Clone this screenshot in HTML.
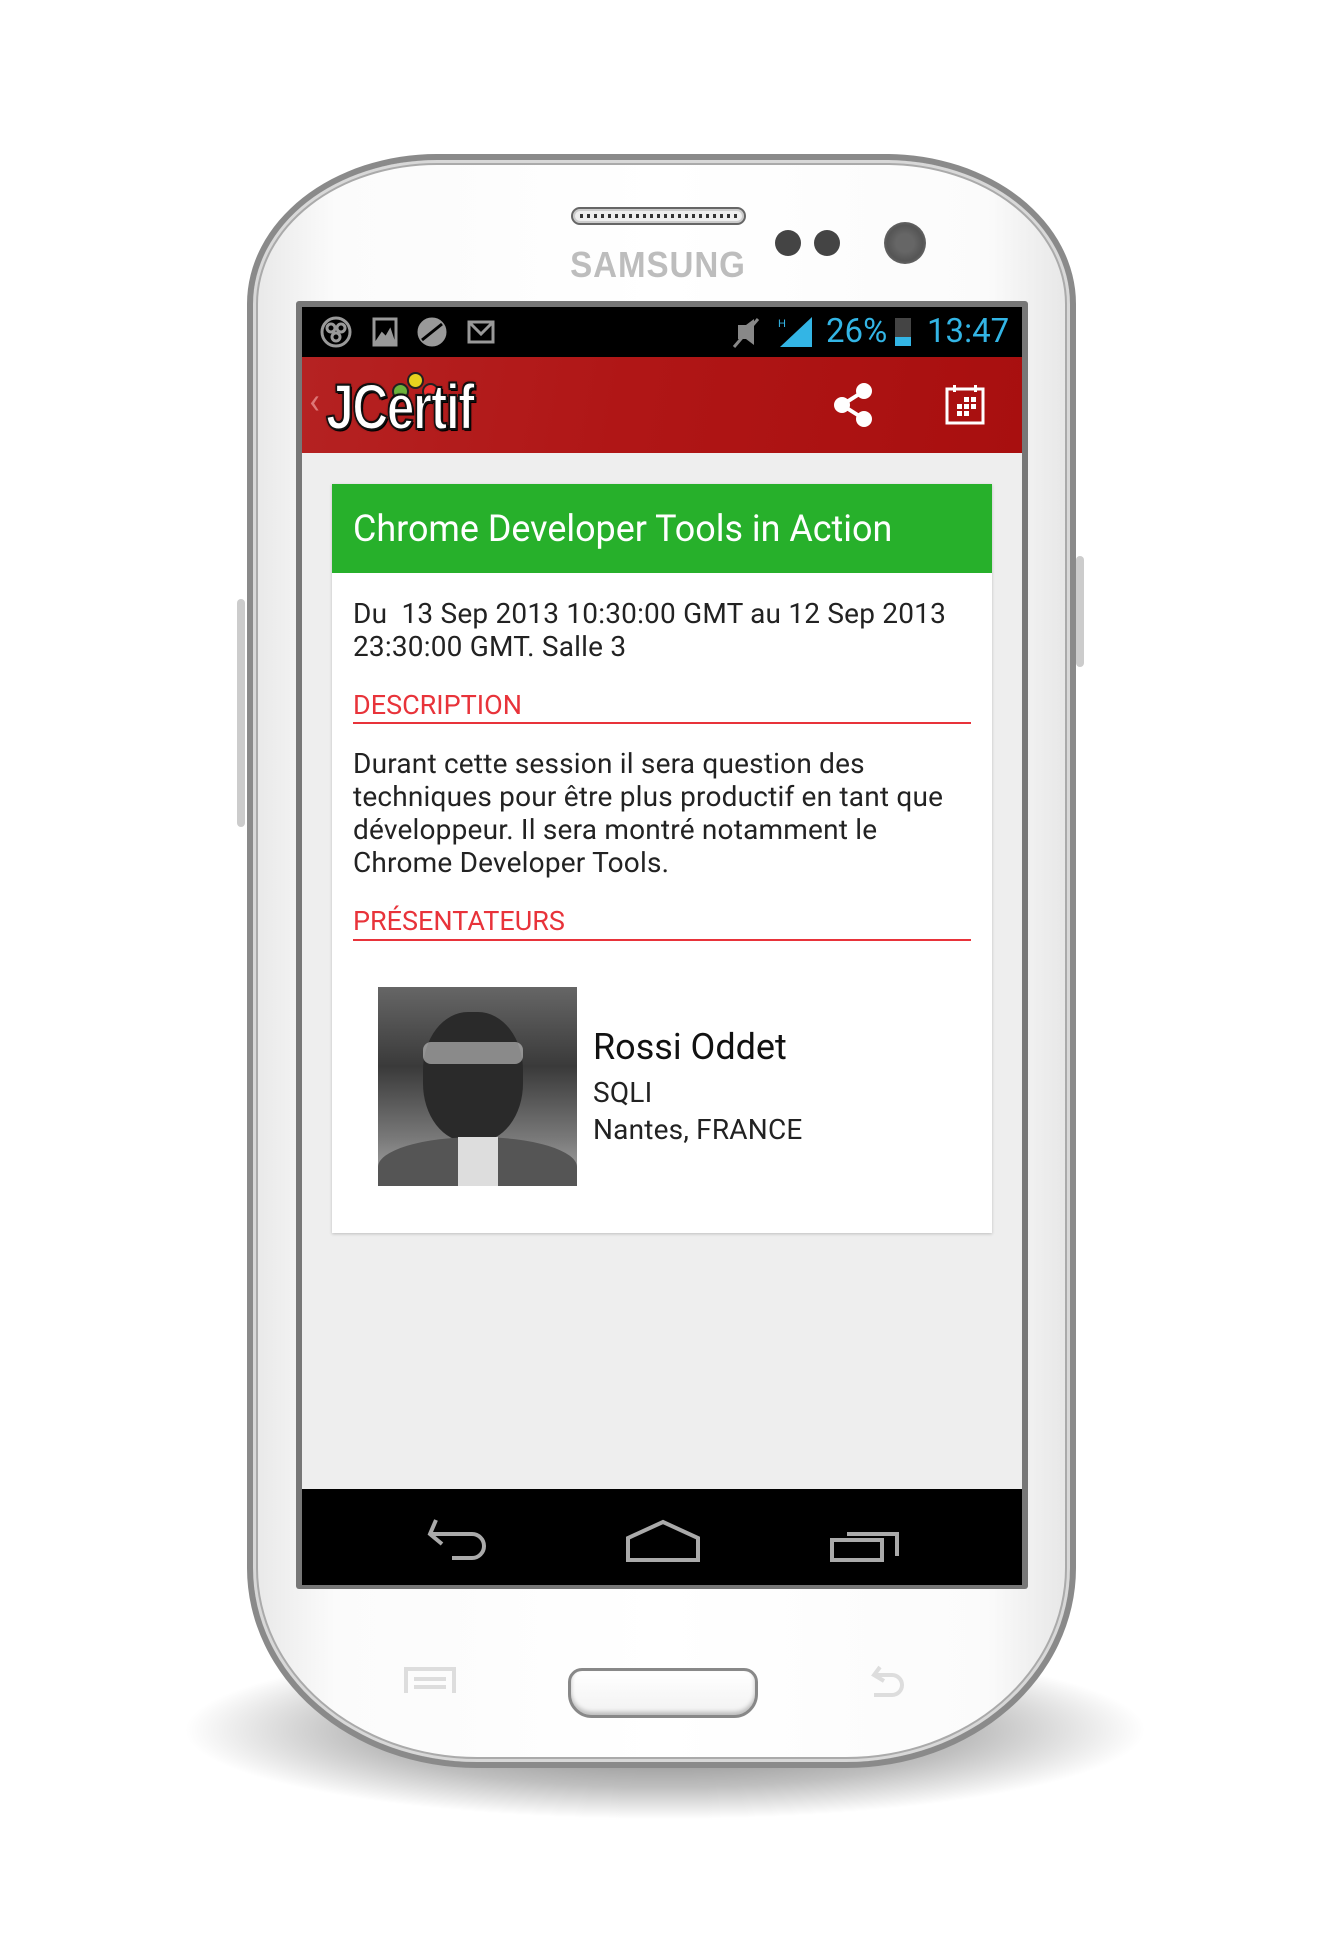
<!DOCTYPE html>
<html><head><meta charset="utf-8"><style>
*{margin:0;padding:0;box-sizing:border-box}
body{width:1331px;height:1942px;background:#fff;position:relative;overflow:hidden;font-family:"Roboto","Liberation Sans",sans-serif}
.abs{position:absolute}
.shadow{left:180px;top:1640px;width:970px;height:180px;border-radius:50%;background:radial-gradient(ellipse at center,rgba(0,0,0,.55) 0%,rgba(0,0,0,.25) 45%,rgba(0,0,0,0) 70%)}
.phone{left:247px;top:154px;width:829px;height:1614px;border-radius:190px 190px 230px 230px/150px 150px 200px 200px;background:linear-gradient(90deg,#e8e8e8,#fbfbfb 10%,#fff 50%,#fbfbfb 90%,#e6e6e6);border:6px solid #8a8a8a;box-shadow:inset 0 0 0 3px #d8d8d8,inset 0 0 0 5px #aaa}
.screen{left:296px;top:301px;width:732px;height:1288px;background:#777;border-radius:3px}
.status{left:302px;top:307px;width:720px;height:50px;background:#000}
.bar{left:302px;top:357px;width:720px;height:96px;background:linear-gradient(100deg,#b52222 0%,#b01616 45%,#a80f0f 100%)}
.content{left:302px;top:453px;width:720px;height:1036px;background:#eeeeee}
.nav{left:302px;top:1489px;width:720px;height:96px;background:#000}
.card{left:332px;top:484px;width:660px;height:749px;background:#fff;box-shadow:0 1px 3px rgba(0,0,0,.2)}
.green{left:332px;top:484px;width:660px;height:89px;background:#27b02b}
.title{left:353px;top:508px;color:#fff;font-size:37px;white-space:nowrap;transform-origin:0 0;transform:scaleX(.97)}
.txt{color:#222;font-size:28px;line-height:33px;white-space:nowrap;letter-spacing:.2px}
.red{color:#e8333a;font-size:27px;white-space:nowrap}
.line{left:353px;width:618px;height:2px;background:#e8333a}
.st{color:#33b5e5;font-size:33px}
</style></head><body>
<div class="abs shadow"></div>
<div class="abs" style="left:237px;top:599px;width:8px;height:228px;background:#ccc;border-radius:4px"></div>
<div class="abs" style="left:1076px;top:556px;width:8px;height:111px;background:#ccc;border-radius:4px"></div>
<div class="abs phone"></div>
<div class="abs" style="left:571px;top:207px;width:175px;height:18px;border-radius:9px;background:#eee;border:2px solid #666;box-shadow:inset 0 0 0 2px #ccc"></div>
<div class="abs" style="left:580px;top:214px;width:157px;height:4px;background:repeating-linear-gradient(90deg,#333 0 3px,transparent 3px 7px)"></div>
<div class="abs" style="left:558px;top:244px;width:200px;text-align:center;font-size:36px;font-weight:bold;color:#bdbdbd;letter-spacing:1px;font-family:'Liberation Sans',sans-serif;transform:scaleX(.92)">SAMSUNG</div>
<div class="abs" style="left:775px;top:230px;width:26px;height:26px;border-radius:50%;background:#444"></div>
<div class="abs" style="left:814px;top:230px;width:26px;height:26px;border-radius:50%;background:#444"></div>
<div class="abs" style="left:884px;top:222px;width:42px;height:42px;border-radius:50%;background:radial-gradient(circle,#666 30%,#555 60%,#888 100%)"></div>
<div class="abs screen"></div>
<div class="abs status"></div>
<div class="abs bar"></div>
<div class="abs content"></div>
<div class="abs nav"></div>
<svg class="abs" style="left:318px;top:314px" width="190" height="36" viewBox="0 0 190 36" fill="none" stroke="#999" stroke-width="3">
<circle cx="18" cy="18" r="14"/><circle cx="13" cy="14" r="4"/><circle cx="23" cy="14" r="4"/><circle cx="18" cy="23" r="4"/>
<rect x="56" y="5" width="22" height="26"/><path d="M58 29 L64 20 L68 24 L72 17 L76 29Z" fill="#999"/>
<circle cx="114" cy="18" r="13" fill="#999"/><path d="M104 26 L124 10" stroke="#000"/>
<rect x="151" y="8" width="24" height="20"/><path d="M151 8 L163 20 L175 8"/>
</svg>
<svg class="abs" style="left:732px;top:315px" width="100" height="36" viewBox="0 0 100 36">
<path d="M6 10 L14 10 L22 4 L22 30 L14 24 L6 24Z" fill="#888"/><path d="M2 32 L26 4" stroke="#888" stroke-width="3"/>
<text x="46" y="12" fill="#33b5e5" font-size="11" font-family="Liberation Sans">H</text>
<path d="M48 32 L80 32 L80 2Z" fill="#33b5e5"/>
</svg>
<div class="abs st" style="left:826px;top:312px">26%</div>
<div class="abs" style="left:895px;top:318px;width:16px;height:28px;background:#444"><div style="position:absolute;bottom:0;width:16px;height:9px;background:#33b5e5"></div></div>
<div class="abs st" style="left:927px;top:312px">13:47</div>
<div class="abs" style="left:309px;top:380px;color:#d77;font-size:36px">‹</div>
<div class="abs" style="left:407px;top:372px;width:17px;height:17px;border-radius:50%;background:#e7d21e;border:2px solid #222"></div>
<div class="abs" style="left:392px;top:383px;width:17px;height:17px;border-radius:50%;background:#6cb33a;border:2px solid #222"></div>
<div class="abs" style="left:422px;top:383px;width:17px;height:17px;border-radius:50%;background:#e33;border:2px solid #222"></div>
<div class="abs" style="left:326px;top:370px;color:#fff;font-size:64px;font-weight:bold;letter-spacing:-2px;transform:scaleX(.78);transform-origin:0 0;-webkit-text-stroke:2px #111;text-shadow:0 0 3px #000,2px 2px 0 #000,-1px -1px 0 #000;font-family:'Liberation Sans',sans-serif">JCertif</div>
<svg class="abs" style="left:832px;top:383px" width="44" height="44" viewBox="0 0 44 44" fill="#fff" stroke="#fff" stroke-width="4">
<path d="M32 8 L10 22 L32 36" fill="none"/><circle cx="32" cy="8" r="6"/><circle cx="10" cy="22" r="6"/><circle cx="32" cy="36" r="6"/></svg>
<svg class="abs" style="left:945px;top:385px" width="40" height="40" viewBox="0 0 40 40" fill="#fff">
<rect x="2" y="4" width="36" height="34" fill="none" stroke="#fff" stroke-width="3"/><rect x="8" y="0" width="3" height="7"/><rect x="29" y="0" width="3" height="7"/>
<rect x="19" y="12" width="5" height="5"/><rect x="26" y="12" width="5" height="5"/><rect x="12" y="19" width="5" height="5"/><rect x="19" y="19" width="5" height="5"/><rect x="26" y="19" width="5" height="5"/><rect x="12" y="26" width="5" height="5"/><rect x="19" y="26" width="5" height="5"/></svg>
<div class="abs card"></div>
<div class="abs green"></div>
<div class="abs title">Chrome Developer Tools in Action</div>
<div class="abs txt" style="left:353px;top:597px">Du&nbsp; 13 Sep 2013 10:30:00 GMT au 12 Sep 2013<br>23:30:00 GMT. Salle 3</div>
<div class="abs red" style="left:353px;top:689px">DESCRIPTION</div>
<div class="abs line" style="top:722px"></div>
<div class="abs txt" style="left:353px;top:747px">Durant cette session il sera question des<br>techniques pour être plus productif en tant que<br>développeur. Il sera montré notamment le<br>Chrome Developer Tools.</div>
<div class="abs red" style="left:353px;top:905px">PRÉSENTATEURS</div>
<div class="abs line" style="top:939px"></div>
<div class="abs" style="left:378px;top:987px;width:199px;height:199px;overflow:hidden;background:linear-gradient(180deg,#666 0%,#3a3a3a 40%,#777 75%,#aaa 100%)">
<div style="position:absolute;left:45px;top:25px;width:100px;height:130px;border-radius:45%;background:#2a2a2a"></div>
<div style="position:absolute;left:45px;top:55px;width:100px;height:22px;background:#ccc;border-radius:8px;opacity:.6"></div>
<div style="position:absolute;left:0;top:150px;width:199px;height:60px;border-radius:50% 50% 0 0;background:#555"></div>
<div style="position:absolute;left:80px;top:150px;width:40px;height:50px;background:#ddd"></div>
</div>
<div class="abs" style="left:593px;top:1026px;font-size:36px;color:#111">Rossi Oddet</div>
<div class="abs txt" style="left:593px;top:1076px">SQLI</div>
<div class="abs txt" style="left:593px;top:1113px">Nantes, FRANCE</div>
<svg class="abs" style="left:422px;top:1512px" width="500" height="60" viewBox="0 0 500 60" fill="none" stroke="#aaa" stroke-width="4">
<path d="M14 8 L8 22 L20 32"/><path d="M8 22 L50 22 A12 12 0 0 1 50 46 L30 46"/>
<path d="M206 48 L206 26 L241 10 L276 26 L276 48Z"/>
<path d="M410 48 L410 28 L460 28 L460 48Z"/><path d="M425 22 L475 22 L475 44"/>
</svg>
<svg class="abs" style="left:402px;top:1663px" width="540" height="60" viewBox="0 0 540 60" fill="none" stroke="#ddd" stroke-width="4">
<path d="M4 30 L4 6 L52 6 L52 30"/><path d="M12 16 L44 16 M12 24 L44 24"/>
<path d="M478 4 L472 12 L482 18"/><path d="M474 12 L490 12 A10 10 0 0 1 490 32 L472 32"/>
</svg>
<div class="abs" style="left:568px;top:1668px;width:190px;height:50px;border-radius:14px 14px 24px 24px;border:3px solid #888;background:linear-gradient(#fff,#f2f2f2);box-shadow:inset 0 -3px 4px #bbb"></div>
</body></html>
